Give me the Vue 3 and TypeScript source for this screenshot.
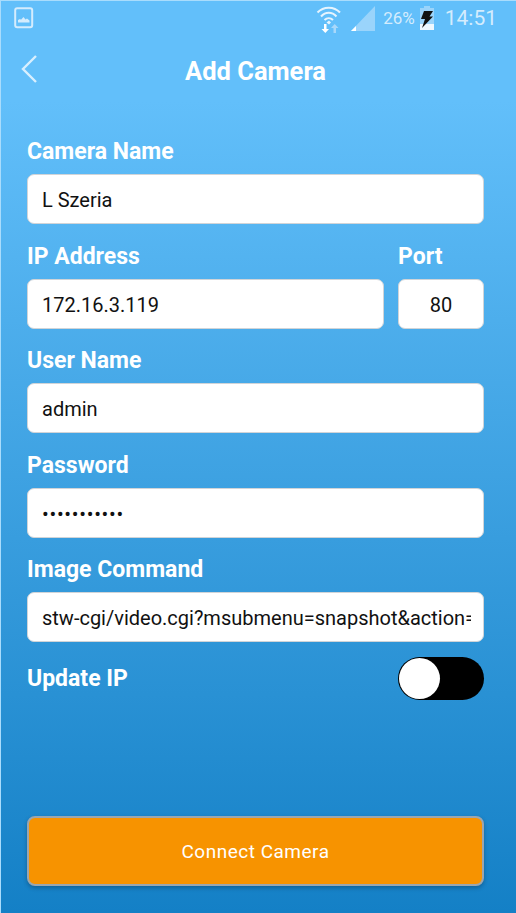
<script setup lang="ts">
import { reactive } from "vue";

const form = reactive({
    name: "L Szeria",
    ip: "172.16.3.119",
    port: "80",
    user: "admin",
    password: "12345678901",
    command: "stw-cgi/video.cgi?msubmenu=snapshot&action=view",
    updateIp: false,
});
</script>

<template>
    <div class="page">
        <div class="status-bar">
            <svg class="gallery" width="20" height="22" viewBox="0 0 20 22">
                <rect x="1.2" y="1.2" width="17" height="19" rx="2" fill="none" stroke="#d4ecfd" stroke-width="2" />
                <path d="M4 15.5V13l2-1 1 .8 2.5-2.8 2 2.5 1.5-1 2.500 2v2z" fill="#d4ecfd" />
            </svg>
            <div class="status-right">
                <svg width="26" height="30" viewBox="0 0 26 30">
                    <g fill="none" stroke="#e6f4fe" stroke-width="2">
                        <path d="M1.500 9.500C7.500 3 18 3 24 9.500" />
                        <path d="M5 13.500C9.500 8.500 16 8.500 20.500 13.500" />
                        <path d="M8.500 17C11 14.500 14.500 14.500 17 17" />
                    </g>
                    <path d="M10.500 19.500L13 21.500L15 19.500L13 17.500z" fill="#e6f4fe" />
                    <path d="M8 21h2.500v5H13l-3.700 4L5.500 26H8z" fill="#fff" />
                    <path d="M17.500 30v-5H15l3.700-4 3.800 4H20v5z" fill="#a8d8fa" />
                </svg>
                <svg class="signal" width="24" height="25" viewBox="0 0 24 25">
                    <path d="M24 0V25H0z" fill="#9ad4fb" />
                    <path d="M5 20V25H0z" fill="#fff" />
                </svg>
                <span class="battery-text">26%</span>
                <svg class="battery" width="16" height="24" viewBox="0 0 16 24">
                    <path d="M5 0h6v2h4v22H1V2h4z" fill="#9ad4fb" />
                    <path d="M1 18h14v6H1z" fill="#eef8ff" />
                    <path d="M5 5h9l-3.500 5.500H14L3 22l3-9H2z" fill="#111" />
                </svg>
                <span class="clock">14:51</span>
            </div>
        </div>

        <header class="header">
            <svg class="back" width="18" height="30" viewBox="0 0 18 30">
                <path d="M16 2L3 15l13 13" fill="none" stroke="#d8effe" stroke-width="2.400" />
            </svg>
            <h1>Add Camera</h1>
        </header>

        <form class="form" @submit.prevent>
            <div class="field">
                <label for="name">Camera Name</label>
                <input id="name" v-model="form.name" type="text" />
            </div>

            <div class="row">
                <div class="field grow">
                    <label for="ip">IP Address</label>
                    <input id="ip" v-model="form.ip" type="text" />
                </div>
                <div class="field port">
                    <label for="port">Port</label>
                    <input id="port" v-model="form.port" type="text" />
                </div>
            </div>

            <div class="field">
                <label for="user">User Name</label>
                <input id="user" v-model="form.user" type="text" />
            </div>

            <div class="field">
                <label for="password">Password</label>
                <input id="password" v-model="form.password" type="password" />
            </div>

            <div class="field">
                <label for="command">Image Command</label>
                <input id="command" v-model="form.command" type="text" />
            </div>

            <div class="toggle-row">
                <span class="toggle-label">Update IP</span>
                <button
                    type="button"
                    class="toggle"
                    :class="{ on: form.updateIp }"
                    aria-label="Update IP"
                    @click="form.updateIp = !form.updateIp"
                >
                    <span class="knob"></span>
                </button>
            </div>

            <button type="button" class="connect">Connect Camera</button>
        </form>
    </div>
</template>

<style>
html,
body {
    margin: 0;
    padding: 0;
}
</style>

<style scoped>
.page {
    box-sizing: border-box;
    width: 516px;
    height: 913px;
    display: flex;
    flex-direction: column;
    overflow: hidden;
    font-family: Roboto, "Liberation Sans", sans-serif;
    color: #fff;
    background: linear-gradient(180deg, #62bffa 0, #62bffa 100px, #1480c6 100%);
    border-top: 1px solid #a9dcfc;
    border-left: 1px solid #a9dcfc;
}

.status-bar {
    height: 34px;
    flex: none;
    display: flex;
    align-items: center;
    justify-content: space-between;
    padding: 0 19px 0 13px;
}

.status-right {
    display: flex;
    align-items: center;
}

.signal {
    margin-left: 9px;
}

.battery-text {
    margin-left: 8px;
    font-size: 17px;
    color: #d4ecfd;
}

.battery {
    margin-left: 4px;
}

.clock {
    margin-left: 10px;
    font-size: 21px;
    color: #d4ecfd;
}

.header {
    box-sizing: border-box;
    height: 70px;
    flex: none;
    display: flex;
    align-items: center;
    justify-content: center;
    padding: 2px 6px 0 0;
    position: relative;
}

.back {
    position: absolute;
    left: 19px;
    top: 19px;
}

.header h1 {
    margin: 0;
    font-size: 25.5px;
    font-weight: 700;
}

.form {
    flex: 1;
    display: flex;
    flex-direction: column;
    gap: 18.5px;
    padding: 33.4px 32px 27px 26px;
}

.field {
    display: flex;
    flex-direction: column;
    gap: 8px;
}

.row {
    display: flex;
    gap: 14px;
}

.grow {
    flex: 1;
    min-width: 0;
}

.port {
    width: 86px;
    flex: none;
}

label,
.toggle-label {
    font-size: 23px;
    line-height: 28px;
    font-weight: 700;
    color: #fff;
}

.toggle-label {
    padding-top: 2px;
}

input {
    box-sizing: border-box;
    width: 100%;
    height: 50px;
    padding: 2px 12px 0 14px;
    font-family: Roboto, "Liberation Sans", sans-serif;
    font-size: 20px;
    color: #111;
    background: #fff;
    border: 1px solid #d0d4d8;
    border-radius: 7px;
    outline: none;
}

#port {
    padding: 2px 0 0;
    text-align: center;
}

#password {
    letter-spacing: 0.7px;
}

.toggle-row {
    display: flex;
    justify-content: space-between;
    align-items: center;
    margin-top: -4px;
}

.toggle {
    width: 86px;
    height: 43px;
    padding: 1px;
    border: none;
    border-radius: 22px;
    background: #000;
    display: flex;
    cursor: pointer;
}

.toggle.on {
    justify-content: flex-end;
}

.knob {
    width: 41px;
    height: 41px;
    border-radius: 50%;
    background: #fff;
}

.connect {
    margin-top: auto;
    height: 70px;
    font-family: Roboto, "Liberation Sans", sans-serif;
    font-size: 19px;
    letter-spacing: 0.5px;
    color: #fff;
    background: #f79300;
    border: 2px solid #9aa6b0;
    border-radius: 8px;
    box-shadow: 0 2px 4px rgba(0, 0, 0, 0.25);
    cursor: pointer;
}
</style>
